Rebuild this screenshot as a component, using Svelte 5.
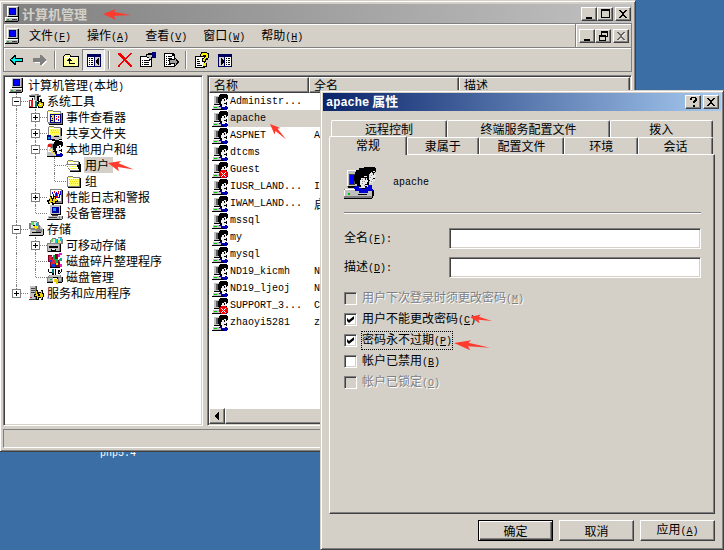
<script lang="ts">
  /**
   * Desktop with the computer management console and, over it,
   * the property sheet of one local user.
   */

  // Each icon is a list of [fill, path] layers, painted in order.
  type Layer = [string, string];

  interface TreeRow {
    label: string;
    icon: string;
    // one letter per level: | line, t tee, l corner
    guides: string;
    toggle?: "+" | "-";
    selected?: boolean;
  }

  const computer: Layer[] = [
    ["#c0c0c0", "M2 0h11v10H2z M0 11h13v4H0z"],
    ["#fff", "M2 0h11v1H3v9H2z M0 11h13v1H1v3H0z"],
    ["#000", "M13 1h1v10H3v-1h10z M13 11h1v4h-1v1H0v-1h13z"],
    ["#808080", "M12 1h1v9h-1z M1 14h12v1H1z"],
    ["#000080", "M4 2h7v7H4z"],
    ["#0000ff", "M5 3h5v5H5z"],
    ["#00c000", "M2 13h2v1H2z"],
    ["#404040", "M7 13h5v1H7z"],
  ];

  const user: Layer[] = [
    ["#c0c0c0", "M1 1h7v9H1z M0 11h9v4H0z"],
    ["#fff", "M1 1h6v1H2v8H1z M0 11h8v1H1v3H0z"],
    ["#606060", "M4 3h2v6H4z"],
    ["#000", "M8 0h7v1h1v4h-1v6h-2v1H8v-1H7V9H6V3h1V1h1z M2 10h5v1H2z M0 15h12v1H0z"],
    ["#f0f0f0", "M10 5h2V4h2v2h1v2h-1v3h-1v1h-3v-2H9V7h1z"],
    ["#000", "M12 5h1v2h-1z M12 9h2v1h-2z"],
    ["#0000b0", "M7 12h3v1h3v-1h2v1h1v2h-1v1h-3v-1H9v-2H7z"],
    ["#00c000", "M2 13h3v1H2z"],
  ];

  const folder: Layer[] = [
    ["#808080", "M1 4h1V3h5v1h7v10H1z"],
    ["#ffff66", "M2 4h5v1h6v8H2z"],
    ["#f4d500", "M3 6h1v1H3z M5 6h1v1H5z M7 6h1v1H7z M9 6h1v1H9z M11 6h1v1h-1z M4 8h1v1H4z M6 8h1v1H6z M8 8h1v1H8z M10 8h1v1h-1z M3 10h1v1H3z M5 10h1v1H5z M7 10h1v1H7z M9 10h1v1H9z M11 10h1v1h-1z"],
    ["#fff", "M2 5h11v1H3v7H2z"],
    ["#000", "M14 5h1v10H2v-1h12z"],
  ];

  const gear: Layer[] = [
    ["#000", "M3 7h2v2h1V7h2v2h1v2h2v2H9v2H7v1H5v-2H3v1H1v-2H0v-2h2V9h1z"],
    ["#f0d000", "M3 8h1v2h3V8h1v2h2v2H8v2H6v-1H4v1H2v-2h1v-2H2v-1h1z"],
    ["#000", "M5 10h1v2H5z"],
  ];

  const icons: Record<string, Layer[]> = {
    computer,
    user,
    blocked: [
      ...user,
      ["#f00000", "M9 8h5v1h1v1h1v4h-1v1h-1v1H9v-1H8v-1H7v-4h1V9h1z"],
      ["#fff", "M9 10h1v1h1v1h1v-1h1v-1h1v1h-1v1h-1v1h1v1h1v1h-1v-1h-1v-1h-1v1h-1v1H9v-1h1v-1h1v-1h-1v-1H9z"],
    ],
    folder,
    openFolder: [
      ["#808080", "M0 7h1V4h1V3h5v1h6v3h1v7H4l-1-2H2v-2H1V8H0z"],
      ["#fff", "M2 5h10v2H2z M1 8h10l2 5H4z"],
      ["#ffff66", "M2 4h5v1H2z M3 9h8v1H3z M4 11h8v1H4z M5 6h1v1H5z M8 6h1v1H8z"],
      ["#000", "M13 5h1v2h1v8H4v-1h9v-2h-1v-2h-1V8h2z"],
    ],
    tools: [
      ["#808080", "M1 2h2V1h8v1h2v2h-2V3H8v4H6V4H1z"],
      ["#000", "M2 3h10v1H2z M4 5h1v4H4z M9 4h2v4H9z M12 6h2v2h-2z"],
      ["#c0c0c0", "M7 2h2v6H7z M3 1h4v1H3z"],
      ["#e02020", "M1 7h4v7H1z"],
      ["#008080", "M6 8h3v7H6z"],
      ["#fff", "M2 8h1v5H2z M6 8h1v6H6z"],
      ["#000", "M1 14h8v1H1z M10 8h4v1h2v4h-1v2h-5v-2H9V9h1z"],
      ["#f0d000", "M11 9h2v1h2v3h-1v1h-3v-1h-1v-2h1z"],
      ["#fff", "M12 11h1v1h-1z"],
    ],
    events: [
      ["#808080", "M0 2h1V1h5v1h8v2h1v11H1v-2H0z"],
      ["#ffff66", "M1 2h5v1h7v10H1z"],
      ["#fff", "M1 3h12v1H2v9H1z"],
      ["#000080", "M3 5h11v9H3z"],
      ["#fff", "M8 6h5v7H8z"],
      ["#f0e040", "M4 6h3v7H4z"],
      ["#000", "M4 7h1v1H4z M5 9h1v1H5z M4 11h2v1H4z M15 4h1v12H2v-1h13z"],
      ["#f00000", "M11 7h1v2h-1z M9 9h1v2H9z"],
      ["#0000ff", "M9 7h1v1H9z M11 10h1v2h-1z"],
    ],
    shared: [
      ["#808080", "M1 2h1V1h5v1h7v10H1z"],
      ["#ffff66", "M2 2h5v1h6v8H2z"],
      ["#fff", "M2 3h11v1H3v7H2z"],
      ["#f4d500", "M4 5h1v1H4z M6 5h1v1H6z M8 5h1v1H8z M10 5h1v1h-1z M5 7h1v1H5z M7 7h1v1H7z M9 7h1v1H9z M11 7h1v1h-1z"],
      ["#000", "M14 3h1v10h-1z"],
      ["#0000a0", "M0 10h4v5H0z"],
      ["#00a0c0", "M1 12h2v2H1z"],
      ["#c0c0c0", "M4 11h4v-1h4v1h3v3h-3v1H6v-1H4z"],
      ["#000", "M4 14h4v1h4v-1h3v1h-3v1H5z M7 11h5v1H7z"],
    ],
    group: [
      ...user,
      ["#c0c0c0", "M0 4h3v3h3v4h2v4H0z"],
      ["#fff", "M1 5h2v3h2v3H1z"],
      ["#e02020", "M1 3h3v3H1z"],
      ["#f0e040", "M2 8h2v2h2v2h2v2H6v-2H4v-2H2z"],
    ],
    perf: [
      ["#808080", "M3 0h12v14H3z"],
      ["#fff", "M4 1h10v11H4z"],
      ["#0000ff", "M5 3h1v2h1v2h1V5h1V3h1v3h1v2h1V5h1V2h1v4h-1v3h-2V8h-1V7H9v2H7V7H6V5H5z"],
      ["#f00000", "M7 2h1v2h1v3h1V4h1V2h1v3h-1v4H9V7H8V4H7z"],
      ["#000", "M15 1h1v14H6v-1h9z"],
      ...gear,
    ],
    device: [
      ["#808080", "M4 0h10v9H4z M2 11h11v4H2z"],
      ["#c0c0c0", "M3 0h10v9H3z M1 11h11v3H1z"],
      ["#0000a0", "M5 2h7v6H5z"],
      ["#00a0ff", "M6 3h3v3H6z"],
      ["#000", "M13 1h1v9H4V9h9z M0 14h12v1H0z"],
      ["#c0c0c0", "M13 11h2v3h-2z"],
      ["#404040", "M5 10h6v1H5z M2 12h8v1H2z M12 14h3v1h-3z M15 11h1v3h-1z"],
    ],
    storage: [
      ["#c0c0c0", "M1 5h12l2 3v6H1z"],
      ["#fff", "M1 6h11v1H2v7H1z"],
      ["#808080", "M3 0h6v1h2v3h1v4H9v1H3V8H1V2h2z"],
      ["#e0e0e0", "M3 1h6v1h1v5H3z"],
      ["#60e060", "M3 1h3v3H3z"],
      ["#f0e000", "M6 5h3v3H7z"],
      ["#00b0d0", "M8 2h2v3H8z"],
      ["#000", "M5 4h2v1H5z M1 14h14v1H1z M15 8h1v6h-1z M4 11h9v1H4z"],
      ["#808080", "M8 8h6v3H8z"],
    ],
    removable: [
      ["#808080", "M5 1h4v1h2V0h4v2h1v5h-3v2H3V3h2z"],
      ["#e8e8e8", "M4 2h5v4H4z M11 1h3v5h-3z"],
      ["#60e060", "M4 2h2v3H4z"],
      ["#f0e000", "M11 3h2v3h-2z"],
      ["#00d0e0", "M8 2h2v4H8z M13 1h2v3h-2z"],
      ["#808080", "M0 6h13v9H0z"],
      ["#c0c0c0", "M1 7h11v7H1z"],
      ["#000", "M2 9h9v2H2z M4 12h5v2H4z M13 7h1v8H1v-1h12z"],
      ["#fff", "M5 12h3v1H5z"],
    ],
    defrag: [
      ["#800020", "M1 2h4v2h3V1h3v6h2v8H3V9H1z"],
      ["#e02040", "M2 3h3v3h3v6H4V8H2z"],
      ["#00b040", "M6 2h2v4h3v4H8V7H6z"],
      ["#0040e0", "M5 11h3v3H5z M3 7h2v2H3z"],
      ["#f0e000", "M9 10h2v2H9z"],
      ["#e020c0", "M11 1h1V0h3v2h-2v2h-2z M13 11h2v3h-2z"],
      ["#00b080", "M12 6h1V5h2v3h-2v1h-1z"],
      ["#000", "M3 14h10v1H3z"],
    ],
    disk: [
      ["#000", "M1 0h1v3h3v1H2V3H1z M8 0h1v6H8z M11 1h2v4h-2z M14 0h1v3h-1v1h-2V3h2z M5 2h2v4H5z"],
      ["#008080", "M5 0h2v4H5z"],
      ["#808080", "M2 6h12l1 3v4H0V9z"],
      ["#c0c0c0", "M3 6h10v2H2z M1 9h5v3H1z M12 9h2v3h-2z"],
      ["#000", "M0 13h15v1H0z M6 8h5v2H6z M15 8h1v5h-1z"],
      ["#fff", "M6 9h4v5H6z"],
      ["#f0d000", "M7 10h4v5H9v-2H7z"],
      ["#00b040", "M3 10h2v1H3z"],
    ],
    services: [
      ["#808080", "M2 1h7v13H2z"],
      ["#c0c0c0", "M1 1h6v13H1z"],
      ["#fff", "M1 0h6v1H2v13H1z"],
      ["#404040", "M3 3h4v1H3z M3 5h4v1H3z M3 7h4v1H3z M1 14h7v1H1z M8 1h1v5H8z"],
      ["#e02020", "M2 12h2v1H2z"],
      ["#000", "M8 5h2v2h3V5h2v3h1v4h-1v3h-2v-2h-2v2H8v-3H6V9h2z"],
      ["#f0d000", "M8 6h1v3h2V8h2V6h1v3h1v3h-1v2h-1v-2h-3v2H9v-3H7v-1h1z"],
      ["#000", "M10 9h2v2h-2z"],
    ],
    back: [
      ["#000", "M5 3h2v3h7v4H7v3H5v-1H4v-1H3v-1H2V9H1V7h1V6h1V5h1V4h1z"],
      ["#00f0f0", "M5 5h1v2h7v2H6v2H5v-1H4V9H3V8H2V7h2V6h1z"],
    ],
    forward: [
      ["#fff", "M3 8h7V5h1v1h1v1h1v1h1v1h1v1h-1v1h-1v1h-1v1h-1v1h-1v-3H3z"],
      ["#808080", "M1 6h7V3h2v1h1v1h1v1h1v1h1v2h-1v1h-1v1h-1v1h-1v1H8v-3H1z"],
    ],
    up: [
      ["#000", "M1 3h1V2h5v1h1v1h8v11H0V4h1z"],
      ["#ffff99", "M2 3h5v2h8v9H1V4h1z"],
      ["#fff", "M1 5h14v1H1z M2 7h1v1H2z M12 7h1v1h-1z M3 9h1v1H3z M12 11h1v1h-1z"],
      ["#000", "M6 6h1v1h1v1h1v1H7v2h5v1H6V9H4V8h1V7h1z"],
    ],
    treePane: [
      ["#000060", "M1 2h14v13H1z"],
      ["#fff", "M2 5h6v9H2z"],
      ["#d4d0c8", "M9 5h5v9H9z"],
      ["#000", "M3 6h1v1H3z M5 6h2v1H5z M3 8h1v1H3z M5 8h2v1H5z M3 10h1v1H3z M5 10h2v1H5z M3 12h1v1H3z M5 12h2v1H5z M12 6h1v7h-1l-2-3V9z"],
    ],
    remove: [
      ["#f00000", "M1 1h3v1h1v1h1v1h1v1h1v1h1V5h1V4h1V3h1V2h1V1h2v1h-1v1h-1v1h-1v1h-1v1h-1v1H9v1h1v1h1v1h1v1h1v1h1v1h1v2h-2v-1h-1v-1h-1v-1h-1v-1H9v-1H8v-1H7v1H6v1H5v1H4v1H3v2H1v-2h1v-1h1v-1h1v-1h1V9h1V7H5V6H4V5H3V4H2V3H1z"],
    ],
    properties: [
      ["#000", "M0 4h12v11H0z"],
      ["#fff", "M1 5h10v9H1z"],
      ["#000", "M2 8h1v1H2z M4 8h6v1H4z M2 10h1v1H2z M4 10h5v1H4z M2 12h1v1H2z M4 12h5v1H4z M6 2h2V1h5v1h1v4h-3v2H9V6H7V5H5V4h1z"],
      ["#c0c0c0", "M7 3h5v2h-1v2H9V5H7z"],
      ["#000080", "M12 0h4v6h-3V5h-1z"],
    ],
    exportList: [
      ["#000", "M1 1h9l2 2v12H1z"],
      ["#fff", "M2 2h7v2h2v10H2z"],
      ["#000", "M3 4h1v1H3z M5 4h4v1H5z M3 6h1v1H3z M5 6h4v1H5z M3 8h1v1H3z M5 8h3v1H5z M3 10h1v1H3z M3 12h1v1H3z M5 12h3v1H5z"],
      ["#000", "M6 7h5V5h1v1h1v1h1v1h1v1h1v2h-1v1h-1v1h-1v1h-1v1h-1v-3H6z"],
      ["#a0a0a0", "M7 8h5V7h1v2h1v2h-1v2h-1v-2H7z"],
    ],
    help: [
      ["#000", "M1 4h10v12H1z"],
      ["#fff", "M2 5h8v10H2z"],
      ["#000", "M3 7h2v1H3z M3 9h3v1H3z M3 11h3v1H3z M3 13h5v1H3z M7 0h6v1h2v5h-1v2h-2v2H8V6h2V5h1V4h-1v1H6V2h1z"],
      ["#ffee00", "M8 1h5v1h1v4h-2v1h-1v2H9V7h1V6h1V5h1V3H9v1H7V2h1z M9 11h3v3H9z"],
      ["#000", "M12 11h1v4H9v-1h3z"],
    ],
    actionPane: [
      ["#000060", "M1 2h14v13H1z"],
      ["#d4d0c8", "M2 5h5v9H2z"],
      ["#fff", "M8 5h6v9H8z"],
      ["#000", "M4 6l3 3v1l-3 3z M9 6h1v1H9z M11 6h2v1h-2z M9 8h1v1H9z M11 8h2v1h-2z M9 10h1v1H9z M11 10h2v1h-2z M9 12h1v1H9z M11 12h2v1h-2z"],
    ],
    minimize: [["#000", "M3 9h6v2H3z"]],
    maximize: [["#000", "M2 1h9v9H2z M3 3v6h7V3z"]],
    restore: [["#000", "M4 1h7v6H9v4H2V5h2z M5 3v2h4v1h1V3z M3 7v3h5V7z"]],
    close: [["#000", "M2 2h2v1h1v1h2V3h1V2h2v1H9v1H8v1H7v2h1v1h1v1h1v1H8V9H7V8H5v1H4v1H2V9h1V8h1V7h1V5H4V4H3V3H2z"]],
    question: [["#000", "M4 1h5v1h1v3H9v1H8v1H6V5h1V4h1V2H5v2H3V2h1z M6 9h2v2H6z"]],
    left: [["#000", "M7 2v8h1V2z M4 6l3-4v8z"]],
    bigUser: [
      ["#808080", "M3 3h12v17H3z M0 22h29v9H0z"],
      ["#c0c0c0", "M4 4h10v15H4z M1 22h27v7H1z"],
      ["#fff", "M3 3h9v1H4v15H3z M1 22h12v1H1v6H0v-6h1z"],
      ["#404040", "M5 7h6v11H5z"],
      ["#0000ff", "M6 8h4v9H6z"],
      ["#000", "M4 19h10v2H4z M0 31h28v1H0z M28 23h2v6h-1v2h-1z"],
      ["#000", "M12 3h3V1h5V0h11v1h1v4h-2v2h-5v3h1v4h-1v4h-2v4h-6v-2h-4v-3h-2v-3h-1V8h1V5h1z"],
      ["#e8e8e8", "M27 5h2V4h2v4h1v2h-1v4h-2v2h-3v-3h-1V9h1V6h1z M17 11h3V9h3v4h1v2h-1v4h-2v2h-4v-3h-1v-5h1z"],
      ["#909090", "M18 12h1v1h-1z M20 14h1v1h-1z M18 16h1v1h-1z M20 18h1v1h-1z M18 14h1v1h-1z M27 8h1v1h-1z M26 10h1v1h-1z M28 12h1v1h-1z M27 14h1v1h-1z"],
      ["#0000ff", "M21 11h1v2h-1z M29 6h1v2h-1z"],
      ["#000", "M20 10h3v1h-3z M28 5h3v1h-3z M21 17h2v1h-2z M29 11h2v1h-2z"],
      ["#0000d0", "M11 19h4v2h3v1h3v-2h3v-2h4v4h1v2h-5v2h-9v-2h-4v-2h-1z"],
      ["#00c000", "M4 26h2v2H4z"],
      ["#000", "M14 27h9v1h-9z"],
    ],
  };

  const menus = [
    ["文件", "F"],
    ["操作", "A"],
    ["查看", "V"],
    ["窗口", "W"],
    ["帮助", "H"],
  ];

  const toolGroups = [
    [["back", "后退"], ["forward", "前进"]],
    [["up", "上移"], ["treePane", "显示/隐藏控制台树"]],
    [["remove", "删除"], ["properties", "属性"], ["exportList", "导出列表"]],
    [["help", "帮助"], ["actionPane", "显示/隐藏操作窗格"]],
  ];

  const tree: TreeRow[] = [
    { label: "计算机管理", icon: "computer", guides: "" },
    { label: "系统工具", icon: "tools", guides: "t", toggle: "-" },
    { label: "事件查看器", icon: "events", guides: "|t", toggle: "+" },
    { label: "共享文件夹", icon: "shared", guides: "|t", toggle: "+" },
    { label: "本地用户和组", icon: "group", guides: "|t", toggle: "-" },
    { label: "用户", icon: "openFolder", guides: "||t", selected: true },
    { label: "组", icon: "folder", guides: "||l" },
    { label: "性能日志和警报", icon: "perf", guides: "|t", toggle: "+" },
    { label: "设备管理器", icon: "device", guides: "|l" },
    { label: "存储", icon: "storage", guides: "t", toggle: "-" },
    { label: "可移动存储", icon: "removable", guides: "|t", toggle: "+" },
    { label: "磁盘碎片整理程序", icon: "defrag", guides: "|t" },
    { label: "磁盘管理", icon: "disk", guides: "|l" },
    { label: "服务和应用程序", icon: "services", guides: "l", toggle: "+" },
  ];

  const users = [
    { name: "Administr...", full: "" },
    { name: "apache", full: "" },
    { name: "ASPNET", full: "A" },
    { name: "dtcms", full: "" },
    { name: "Guest", full: "", blocked: true },
    { name: "IUSR_LAND...", full: "I" },
    { name: "IWAM_LAND...", full: "启" },
    { name: "mssql", full: "" },
    { name: "my", full: "" },
    { name: "mysql", full: "" },
    { name: "ND19_kicmh", full: "N" },
    { name: "ND19_ljeoj", full: "N" },
    { name: "SUPPORT_3...", full: "C", blocked: true },
    { name: "zhaoyi5281", full: "z" },
  ];

  // share is the tab's part of its row
  const backTabs = [
    { label: "远程控制", share: 116 },
    { label: "终端服务配置文件", share: 163 },
    { label: "拨入", share: 103 },
  ];
  const frontTabs = [
    { label: "常规", share: 78 },
    { label: "隶属于", share: 72 },
    { label: "配置文件", share: 86 },
    { label: "环境", share: 74 },
    { label: "会话", share: 75 },
  ];

  let activeTab = $state("常规");
  let selectedUser = $state("apache");
  let fullName = $state("");
  let description = $state("");

  let options = $state([
    { label: "用户下次登录时须更改密码", key: "M", checked: false, disabled: true },
    { label: "用户不能更改密码", key: "C", checked: true, disabled: false },
    { label: "密码永不过期", key: "P", checked: true, disabled: false, focus: true },
    { label: "帐户已禁用", key: "B", checked: false, disabled: false },
    { label: "帐户已锁定", key: "O", checked: false, disabled: true },
  ]);
</script>

{#snippet icon(name: string, size = 16)}
  <svg class="icon" width={size} height={size} viewBox="0 0 {size} {size}" aria-hidden="true">
    {#each icons[name] as [fill, d]}
      <path {fill} {d} fill-rule="evenodd" />
    {/each}
  </svg>
{/snippet}

{#snippet mnemonic(key: string)}<span class="latin">(<u>{key}</u>)</span>{/snippet}

{#snippet tab(item: { label: string; share: number })}
  <button
    class="tab"
    class:active={item.label === activeTab}
    role="tab"
    aria-selected={item.label === activeTab}
    style="flex-grow: {item.share}"
    onclick={() => (activeTab = item.label)}>{item.label}</button>
{/snippet}

<main class="desktop">
  <span class="shortcut latin">php5.4</span>

  <section class="window console" aria-label="计算机管理">
    <header class="titlebar inactive">
      {@render icon("computer")}
      <h1>计算机管理</h1>
      <div class="caption-buttons">
        <button class="caption" aria-label="最小化">{@render icon("minimize", 12)}</button>
        <button class="caption" aria-label="最大化">{@render icon("maximize", 12)}</button>
        <button class="caption apart" aria-label="关闭">{@render icon("close", 12)}</button>
      </div>
    </header>

    <div class="menubar">
      <nav class="band menus">
        {@render icon("computer")}
        {#each menus as [label, key]}
          <button class="menu">{label}{@render mnemonic(key)}</button>
        {/each}
      </nav>
      <div class="band child-buttons">
        <button class="caption" aria-label="最小化子窗口">{@render icon("minimize", 12)}</button>
        <button class="caption" aria-label="还原子窗口">{@render icon("restore", 12)}</button>
        <button class="caption apart" aria-label="关闭子窗口" disabled>{@render icon("close", 12)}</button>
      </div>
    </div>

    <div class="band toolbar">
      {#each toolGroups as group, i}
        {#if i > 0}<span class="separator"></span>{/if}
        {#each group as [name, label]}
          <button class="tool" class:pressed={name === "treePane"} aria-label={label}>
            {@render icon(name)}
          </button>
        {/each}
      {/each}
    </div>

    <div class="panes">
      <div class="pane tree" role="tree" aria-label="控制台树">
        {#each tree as row}
          <div class="tree-row" role="treeitem" aria-selected={!!row.selected}>
            {#each row.guides as guide, level}
              <span class="guide" class:half={guide === "l"} class:branch={guide !== "|"}>
                {#if row.toggle && level === row.guides.length - 1}
                  <button class="toggle" class:plus={row.toggle === "+"} aria-label="展开或折叠{row.label}"></button>
                {/if}
              </span>
            {/each}
            {@render icon(row.icon)}
            <span class="tree-label" class:selected={row.selected}>
              {row.label}{#if row.guides === ""}<span class="latin">(</span>本地<span class="latin">)</span>{/if}
            </span>
          </div>
        {/each}
      </div>

      <div class="pane list">
        <table>
          <colgroup>
            <col class="col-name" />
            <col class="col-full" />
            <col />
          </colgroup>
          <thead>
            <tr><th>名称</th><th>全名</th><th>描述</th></tr>
          </thead>
          <tbody>
            {#each users as item (item.name)}
              <tr class:selected={item.name === selectedUser} onclick={() => (selectedUser = item.name)}>
                <td class="name">
                  <div class="name-box">
                    {@render icon(item.blocked ? "blocked" : "user")}
                    <span class="cell latin">{item.name}</span>
                  </div>
                </td>
                <td><span class="cell" class:latin={item.full !== "启"}>{item.full}</span></td>
                <td></td>
              </tr>
            {/each}
          </tbody>
        </table>
        <div class="scrollbar">
          <button class="scroll-button" aria-label="向左滚动">{@render icon("left", 12)}</button>
          <div class="thumb"></div>
        </div>
      </div>
    </div>

    <footer class="statusbar"></footer>
  </section>

  <div class="window dialog" role="dialog" aria-label="apache 属性">
    <header class="titlebar">
      <h2><span class="latin">apache</span> 属性</h2>
      <div class="caption-buttons">
        <button class="caption" aria-label="帮助">{@render icon("question", 12)}</button>
        <button class="caption apart" aria-label="关闭">{@render icon("close", 12)}</button>
      </div>
    </header>

    <form class="sheet" onsubmit={(e) => e.preventDefault()}>
      <div class="tabs" role="tablist">
        <div class="tab-row">
          {#each backTabs as item}{@render tab(item)}{/each}
        </div>
        <div class="tab-row front">
          {#each frontTabs as item}{@render tab(item)}{/each}
        </div>
      </div>

      <div class="panel" role="tabpanel">
        <div class="identity">
          {@render icon("bigUser", 32)}
          <span class="latin">apache</span>
        </div>
        <hr />
        <div class="fields">
          <label for="full-name">全名{@render mnemonic("F")}<span class="latin">:</span></label>
          <input id="full-name" type="text" bind:value={fullName} />
          <label for="description">描述{@render mnemonic("D")}<span class="latin">:</span></label>
          <input id="description" type="text" bind:value={description} />
        </div>
        <div class="options">
          {#each options as option}
            <label class="option" class:disabled={option.disabled}>
              <input type="checkbox" bind:checked={option.checked} disabled={option.disabled} />
              <span class="option-text" class:focus={option.focus}>{option.label}{@render mnemonic(option.key)}</span>
            </label>
          {/each}
        </div>
      </div>

      <div class="actions">
        <button class="push default" type="submit">确定</button>
        <button class="push" type="button">取消</button>
        <button class="push" type="button">应用{@render mnemonic("A")}</button>
      </div>
    </form>
  </div>

  <svg class="marks" aria-hidden="true">
    <defs><path id="mark" d="M0 0L13-5 11-2 28 1 11 2 13 6z" /></defs>
    <use href="#mark" transform="translate(103 14)" />
    <use href="#mark" transform="translate(108 163) rotate(12) scale(.95)" />
    <use href="#mark" transform="translate(270 124) rotate(42) scale(.8)" />
    <use href="#mark" transform="translate(470 317) rotate(8) scale(.8)" />
    <use href="#mark" transform="translate(454 343) rotate(6) scale(1.3 .9)" />
  </svg>
</main>

<style>
  :global(body) {
    margin: 0;
    overflow: hidden;
    background: #3a6ea5;
  }

  .desktop {
    position: relative;
    height: 100vh;
    overflow: hidden;
    font: 12px/16px "Noto Sans CJK SC", sans-serif;
    color: #000;
    white-space: nowrap;
    cursor: default;
  }

  button,
  input {
    font: inherit;
    color: inherit;
    box-sizing: border-box;
    margin: 0;
    padding: 0;
    border-radius: 0;
    outline: none;
  }

  .latin {
    font-family: "Liberation Mono", monospace;
    font-size: 10px;
  }

  u {
    text-underline-offset: 1px;
  }

  .icon {
    display: block;
    flex: none;
    shape-rendering: crispEdges;
  }

  .shortcut {
    position: absolute;
    left: 100px;
    bottom: 88px;
    color: #fff;
  }

  .window {
    position: absolute;
    display: flex;
    flex-direction: column;
    box-sizing: border-box;
    background: #d4d0c8;
    border: 1px solid;
    border-color: #d4d0c8 #404040 #404040 #d4d0c8;
    box-shadow: inset 1px 1px #fff, inset -1px -1px #808080;
  }

  .console {
    left: -1px;
    right: 88px;
    top: 0;
    bottom: 98px;
    padding: 3px;
  }

  .dialog {
    left: 320px;
    right: 0;
    top: 90px;
    bottom: 0;
    padding: 2px;
  }

  .titlebar {
    display: flex;
    align-items: center;
    flex: none;
    height: 18px;
    padding: 0 2px;
    color: #fff;
    background: linear-gradient(to right, #0a246a, #a6caf0);
  }

  .titlebar.inactive {
    height: 19px;
    padding-right: 1px;
    color: #d4d0c8;
    background: linear-gradient(to right, #808080, #c0c0c0);
  }

  h1,
  h2 {
    flex: 1;
    margin: 0;
    padding-left: 1px;
    font-size: 13px;
    line-height: 18px;
    font-weight: bold;
  }

  h2 .latin {
    font-size: 12px;
  }

  .caption-buttons,
  .child-buttons {
    display: flex;
    align-items: center;
  }

  .caption,
  .scroll-button,
  .thumb,
  th {
    background: #d4d0c8;
    border: 1px solid;
    border-color: #fff #404040 #404040 #fff;
    box-shadow: inset -1px -1px #808080;
  }

  .caption {
    width: 16px;
    height: 14px;
    display: flex;
    justify-content: center;
    align-items: center;
  }

  .apart {
    margin-left: 2px;
  }

  .caption:disabled .icon {
    opacity: 0.5;
    filter: drop-shadow(1px 1px #fff);
  }

  .band {
    box-sizing: border-box;
    border: 1px solid #808080;
    box-shadow: inset 1px 1px #fff;
  }

  .menubar {
    display: flex;
    flex: none;
    height: 24px;
  }

  .menus {
    flex: 1;
    display: flex;
    align-items: center;
    padding: 1px 0 0 1px;
    border-bottom: 0;
  }

  .menu {
    padding: 0 8px;
    border: 0;
    background: none;
  }

  .child-buttons {
    padding: 0 2px 0 3px;
    border-bottom: 0;
    border-left: 0;
  }

  .toolbar {
    flex: none;
    display: flex;
    align-items: center;
    height: 25px;
    padding-left: 1px;
  }

  .tool {
    width: 23px;
    height: 22px;
    display: flex;
    align-items: center;
    justify-content: center;
    background: none;
    border: 1px solid transparent;
  }

  .tool.pressed {
    border-color: #808080 #fff #fff #808080;
    background: #ebe9e5;
  }

  .separator {
    width: 1px;
    height: 18px;
    margin: 0 3px;
    background: #808080;
    border-right: 1px solid #fff;
  }

  .panes {
    flex: 1;
    min-height: 0;
    display: flex;
    gap: 4px;
    padding-top: 3px;
  }

  .pane {
    box-sizing: border-box;
    background: #fff;
    border: 1px solid;
    border-color: #808080 #fff #fff #808080;
    box-shadow: inset 1px 1px #404040, inset -1px -1px #d4d0c8;
    overflow: hidden;
  }

  .tree {
    flex: none;
    width: 200px;
    padding: 1px 1px 1px 5px;
  }

  .tree-row {
    display: flex;
    height: 16px;
  }

  .guide {
    position: relative;
    width: 19px;
    flex: none;
  }

  .guide::before {
    content: "";
    position: absolute;
    left: 7px;
    top: 0;
    height: 100%;
    border-left: 1px dotted #808080;
  }

  .guide.half::before {
    height: 8px;
  }

  .guide.branch::after {
    content: "";
    position: absolute;
    left: 8px;
    right: 0;
    top: 8px;
    border-top: 1px dotted #808080;
  }

  .toggle {
    position: absolute;
    z-index: 1;
    left: 3px;
    top: 4px;
    width: 9px;
    height: 9px;
    border: 1px solid #808080;
    background: linear-gradient(#000, #000) center / 5px 1px no-repeat #fff;
  }

  .toggle.plus {
    background:
      linear-gradient(#000, #000) center / 5px 1px no-repeat,
      linear-gradient(#000, #000) center / 1px 5px no-repeat,
      #fff;
  }

  .tree-label {
    margin-left: 2px;
    padding: 0 4px 0 1px;
  }

  .tree-label.selected {
    background: #d4d0c8;
  }

  .list {
    flex: 1;
    min-width: 0;
    display: flex;
    flex-direction: column;
    justify-content: space-between;
    padding: 1px;
  }

  table {
    width: 100%;
    table-layout: fixed;
    border-collapse: separate;
    border-spacing: 0;
  }

  .col-name {
    width: 100px;
  }

  .col-full {
    width: 150px;
  }

  th {
    height: 16px;
    box-sizing: border-box;
    padding: 0 4px;
    line-height: 14px;
    font-weight: normal;
    text-align: left;
  }

  td {
    height: 17px;
    padding: 0 0 0 5px;
    vertical-align: top;
  }

  td.name {
    padding-left: 3px;
  }

  .name-box {
    display: flex;
    align-items: center;
  }

  .cell {
    display: block;
    height: 17px;
    line-height: 17px;
  }

  .name-box .cell {
    flex: 1;
    padding-left: 2px;
  }

  tr.selected td:not(.name),
  tr.selected .cell {
    background: #d4d0c8;
  }

  .scrollbar {
    display: flex;
    height: 16px;
    background: #ebe9e5;
  }

  .scroll-button {
    width: 16px;
    display: flex;
    align-items: center;
    justify-content: center;
  }

  .thumb {
    width: 60%;
  }

  .statusbar {
    flex: none;
    height: 17px;
    margin-top: 3px;
    border: 1px solid;
    border-color: #808080 #fff #fff #808080;
  }

  .sheet {
    flex: 1;
    display: flex;
    flex-direction: column;
    padding: 9px 6px 6px;
  }

  .tabs {
    position: relative;
    z-index: 1;
  }

  .tab-row {
    display: flex;
    height: 17px;
    margin: 0 2px;
  }

  .tab-row.front {
    margin-left: 0;
  }

  .tab {
    flex: 1 1 0;
    min-width: 0;
    height: 17px;
    background: #d4d0c8;
    border: 1px solid;
    border-color: #fff #404040 transparent #fff;
    border-bottom: 0;
    border-radius: 2px 2px 0 0;
    box-shadow: inset -1px 0 #808080;
  }

  .tab.active {
    height: 19px;
    margin-top: -1px;
    padding-bottom: 2px;
  }

  .panel {
    flex: 1;
    padding: 12px 13px 12px 14px;
    border: 1px solid;
    border-color: #fff #404040 #404040 #fff;
    box-shadow: inset -1px -1px #808080;
  }

  .identity {
    display: flex;
    align-items: center;
    gap: 17px;
  }

  hr {
    margin: 13px 0 14px;
    border: 0;
    border-top: 1px solid #808080;
    border-bottom: 1px solid #fff;
  }

  .fields {
    display: grid;
    grid-template-columns: 105px 1fr;
    row-gap: 8px;
    align-items: center;
  }

  input[type="text"] {
    width: 100%;
    height: 21px;
    padding: 0 4px;
    background: #fff;
    border: 1px solid;
    border-color: #808080 #fff #fff #808080;
    box-shadow: inset 1px 1px #404040, inset -1px -1px #d4d0c8;
  }

  .options {
    display: grid;
    margin-top: 10px;
  }

  .option {
    display: flex;
    align-items: center;
    gap: 4px;
    height: 21px;
  }

  .option.disabled {
    color: #808080;
    text-shadow: 1px 1px #fff;
  }

  input[type="checkbox"] {
    appearance: none;
    width: 13px;
    height: 13px;
    background: #fff;
    border: 1px solid;
    border-color: #808080 #fff #fff #808080;
    box-shadow: inset 1px 1px #404040, inset -1px -1px #d4d0c8;
  }

  input[type="checkbox"]:disabled {
    background: #d4d0c8;
  }

  input[type="checkbox"]:checked::before {
    content: "";
    display: block;
    width: 7px;
    height: 7px;
    margin: 2px;
    background: #000;
    clip-path: polygon(0 28%, 28% 57%, 100% 0, 100% 43%, 28% 100%, 0 71%);
  }

  .option-text {
    line-height: 14px;
    border: 1px dotted transparent;
  }

  .option-text.focus {
    border-color: #000;
  }

  .actions {
    display: flex;
    justify-content: flex-end;
    gap: 6px;
    margin-top: 6px;
  }

  .push {
    width: 75px;
    height: 21px;
    line-height: 16px;
    background: #d4d0c8;
    border: 1px solid;
    border-color: #fff #404040 #404040 #fff;
    box-shadow: inset -1px -1px #808080;
  }

  .push.default {
    border-color: #000;
    box-shadow: inset 1px 1px #fff, inset -1px -1px #404040, inset -2px -2px #808080;
  }

  .marks {
    position: absolute;
    inset: 0;
    width: 100%;
    height: 100%;
    fill: #ff3b30;
    pointer-events: none;
  }
</style>
